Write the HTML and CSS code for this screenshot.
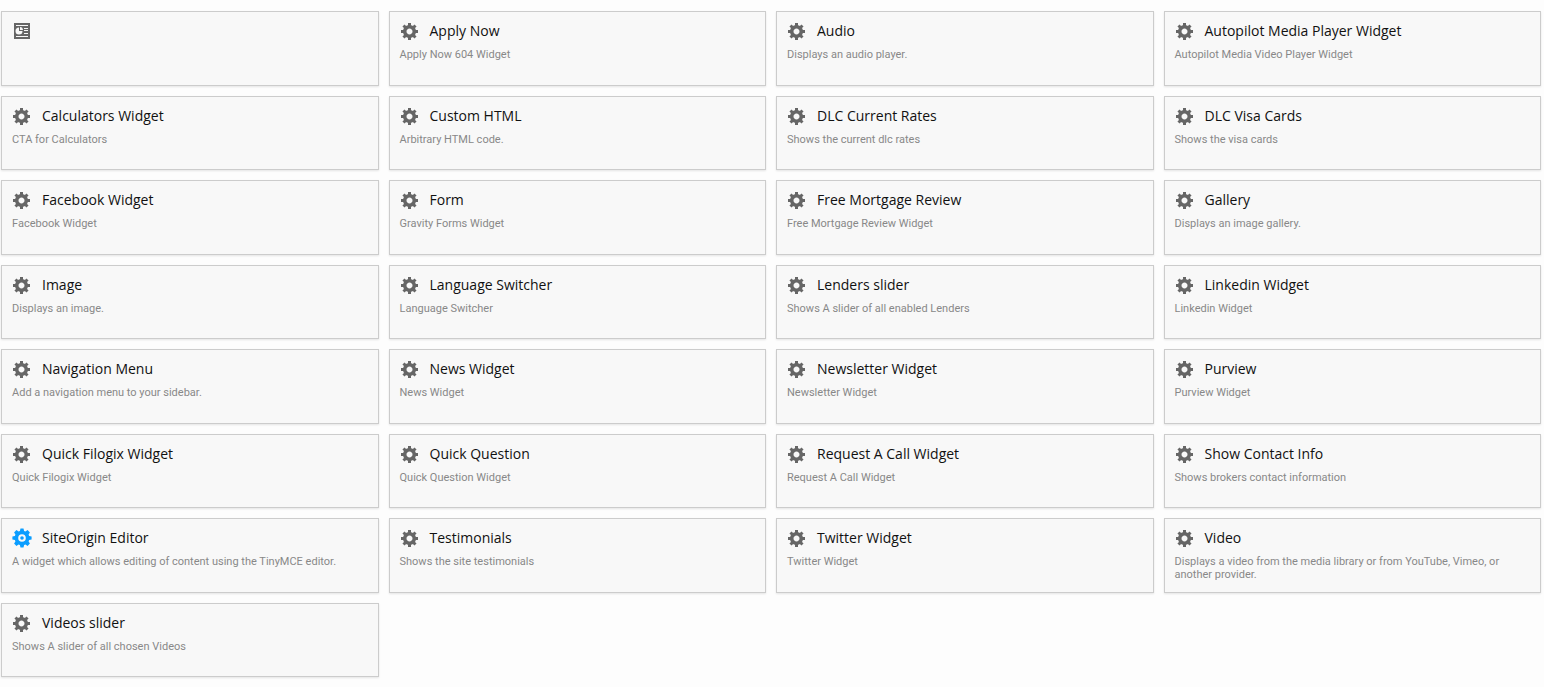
FILE: index.html
```html
<!DOCTYPE html>
<html lang="en">
<head>
<meta charset="utf-8">
<title>Widgets</title>
	<link rel="stylesheet" href="styles.css">
</head>

<body>
<svg class="sprite" aria-hidden="true">
	<symbol id="gear" viewBox="0 0 20 20">
		<path d="M18 12h-2.18c-.17.7-.44 1.35-.81 1.93l1.54 1.54-2.1 2.1-1.54-1.54c-.58.36-1.23.63-1.91.79V19H8v-2.18c-.68-.16-1.33-.43-1.91-.79l-1.54 1.54-2.12-2.12 1.54-1.54c-.36-.58-.63-1.23-.79-1.91H1V9.03h2.17c.16-.7.44-1.35.8-1.94L2.43 5.55l2.1-2.1 1.54 1.54c.58-.37 1.24-.64 1.93-.81V2h3v2.18c.68.16 1.33.43 1.91.79l1.54-1.54 2.12 2.12-1.54 1.54c.36.59.64 1.24.8 1.94H18V12zm-8.5 1.5c1.66 0 3-1.34 3-3s-1.34-3-3-3-3 1.34-3 3 1.34 3 3 3z"/>
	</symbol>
	<symbol id="layout" viewBox="0 0 20 20">
		<path fill-rule="evenodd" d="M2 2h16v16H2zM4 4v1h12V4zM4 15v1h12v-1zM12 7v1h4V7zM12 9v1h4V9zM12 12v1h4v-1zM7 6.500a3.500 3.500 0 1 0 3.500 3.500H7z"/>
		<path class="slice" d="M8 6A3.300 3.300 0 0 1 11 9H8z"/>
	</symbol>
	<symbol id="siteorigin" viewBox="0 0 20 20">
		<path fill-rule="evenodd" d="M8.500.4h3l.6 2.500 1.300.5 2.200-1.300 2.300 2.300-1.300 2.200.5 1.300 2.500.6v3l-2.500.6-.5 1.300 1.300 2.200-2.300 2.300-2.200-1.300-1.300.5-.6 2.500h-3l-.6-2.500-1.300-.5-2.200 1.300-2.300-2.300 1.300-2.200-.5-1.300-2.500-.6v-3l2.500-.6.5-1.300L2.100 4.400l2.300-2.300 2.200 1.300 1.300-.5zM10 6.200a3.800 3.800 0 1 0 0 7.600 3.800 3.800 0 0 0 0-7.600z"/>
		<circle cx="10" cy="10" r="1.8"/>
	</symbol>
</svg>

<ul class="widgets">
	<li class="widget">
		<h3><svg class="icon"><use href="#layout"/></svg></h3>
	</li>
	<li class="widget">
		<h3><svg class="icon"><use href="#gear"/></svg>Apply Now</h3>
		<p>Apply Now 604 Widget</p>
	</li>
	<li class="widget">
		<h3><svg class="icon"><use href="#gear"/></svg>Audio</h3>
		<p>Displays an audio player.</p>
	</li>
	<li class="widget">
		<h3><svg class="icon"><use href="#gear"/></svg>Autopilot Media Player Widget</h3>
		<p>Autopilot Media Video Player Widget</p>
	</li>
	<li class="widget">
		<h3><svg class="icon"><use href="#gear"/></svg>Calculators Widget</h3>
		<p>CTA for Calculators</p>
	</li>
	<li class="widget">
		<h3><svg class="icon"><use href="#gear"/></svg>Custom HTML</h3>
		<p>Arbitrary HTML code.</p>
	</li>
	<li class="widget">
		<h3><svg class="icon"><use href="#gear"/></svg>DLC Current Rates</h3>
		<p>Shows the current dlc rates</p>
	</li>
	<li class="widget">
		<h3><svg class="icon"><use href="#gear"/></svg>DLC Visa Cards</h3>
		<p>Shows the visa cards</p>
	</li>
	<li class="widget">
		<h3><svg class="icon"><use href="#gear"/></svg>Facebook Widget</h3>
		<p>Facebook Widget</p>
	</li>
	<li class="widget">
		<h3><svg class="icon"><use href="#gear"/></svg>Form</h3>
		<p>Gravity Forms Widget</p>
	</li>
	<li class="widget">
		<h3><svg class="icon"><use href="#gear"/></svg>Free Mortgage Review</h3>
		<p>Free Mortgage Review Widget</p>
	</li>
	<li class="widget">
		<h3><svg class="icon"><use href="#gear"/></svg>Gallery</h3>
		<p>Displays an image gallery.</p>
	</li>
	<li class="widget">
		<h3><svg class="icon"><use href="#gear"/></svg>Image</h3>
		<p>Displays an image.</p>
	</li>
	<li class="widget">
		<h3><svg class="icon"><use href="#gear"/></svg>Language Switcher</h3>
		<p>Language Switcher</p>
	</li>
	<li class="widget">
		<h3><svg class="icon"><use href="#gear"/></svg>Lenders slider</h3>
		<p>Shows A slider of all enabled Lenders</p>
	</li>
	<li class="widget">
		<h3><svg class="icon"><use href="#gear"/></svg>Linkedin Widget</h3>
		<p>Linkedin Widget</p>
	</li>
	<li class="widget">
		<h3><svg class="icon"><use href="#gear"/></svg>Navigation Menu</h3>
		<p>Add a navigation menu to your sidebar.</p>
	</li>
	<li class="widget">
		<h3><svg class="icon"><use href="#gear"/></svg>News Widget</h3>
		<p>News Widget</p>
	</li>
	<li class="widget">
		<h3><svg class="icon"><use href="#gear"/></svg>Newsletter Widget</h3>
		<p>Newsletter Widget</p>
	</li>
	<li class="widget">
		<h3><svg class="icon"><use href="#gear"/></svg>Purview</h3>
		<p>Purview Widget</p>
	</li>
	<li class="widget">
		<h3><svg class="icon"><use href="#gear"/></svg>Quick Filogix Widget</h3>
		<p>Quick Filogix Widget</p>
	</li>
	<li class="widget">
		<h3><svg class="icon"><use href="#gear"/></svg>Quick Question</h3>
		<p>Quick Question Widget</p>
	</li>
	<li class="widget">
		<h3><svg class="icon"><use href="#gear"/></svg>Request A Call Widget</h3>
		<p>Request A Call Widget</p>
	</li>
	<li class="widget">
		<h3><svg class="icon"><use href="#gear"/></svg>Show Contact Info</h3>
		<p>Shows brokers contact information</p>
	</li>
	<li class="widget">
		<h3><svg class="icon icon-blue"><use href="#siteorigin"/></svg>SiteOrigin Editor</h3>
		<p>A widget which allows editing of content using the TinyMCE editor.</p>
	</li>
	<li class="widget">
		<h3><svg class="icon"><use href="#gear"/></svg>Testimonials</h3>
		<p>Shows the site testimonials</p>
	</li>
	<li class="widget">
		<h3><svg class="icon"><use href="#gear"/></svg>Twitter Widget</h3>
		<p>Twitter Widget</p>
	</li>
	<li class="widget">
		<h3><svg class="icon"><use href="#gear"/></svg>Video</h3>
		<p>Displays a video from the media library or from YouTube, Vimeo, or another provider.</p>
	</li>
	<li class="widget">
		<h3><svg class="icon"><use href="#gear"/></svg>Videos slider</h3>
		<p>Shows A slider of all chosen Videos</p>
	</li>
</ul>
</body>
</html>
```

FILE: styles.css
```css
body {
  margin: 0;
  background-color: #fdfdfd;
  font-family: "Open Sans", "Noto Sans", sans-serif;
}
.sprite {
  display: none;
}
.widgets {
  display: grid;
  grid-template-columns: repeat(4, 1fr);
  grid-auto-rows: 1fr;
  gap: 10px;
  min-height: 100vh;
  box-sizing: border-box;
  margin: 0;
  padding: 11px 3px 10px 1px;
  list-style: none;
}
.widget {
  box-sizing: border-box;
  padding: 9px 10px;
  border: 1px solid #ccc;
  background-color: #f8f8f8;
  box-shadow: 0 1px 2px rgba(0, 0, 0, 0.1);
}
.widget h3 {
  display: flex;
  align-items: center;
  gap: 10px;
  margin: 0 0 7px;
  color: #111;
  font-size: 14px;
  font-weight: 500;
  line-height: 20px;
}
.widget p {
  margin: 0;
  color: #888;
  font-family: Roboto, sans-serif;
  font-size: 11px;
  line-height: 13px;
}
.icon {
  flex: none;
  width: 20px;
  height: 20px;
  fill: #666;
}
.icon-blue {
  fill: #0a9dff;
}
.slice {
  fill: #f8f8f8;
}
```
